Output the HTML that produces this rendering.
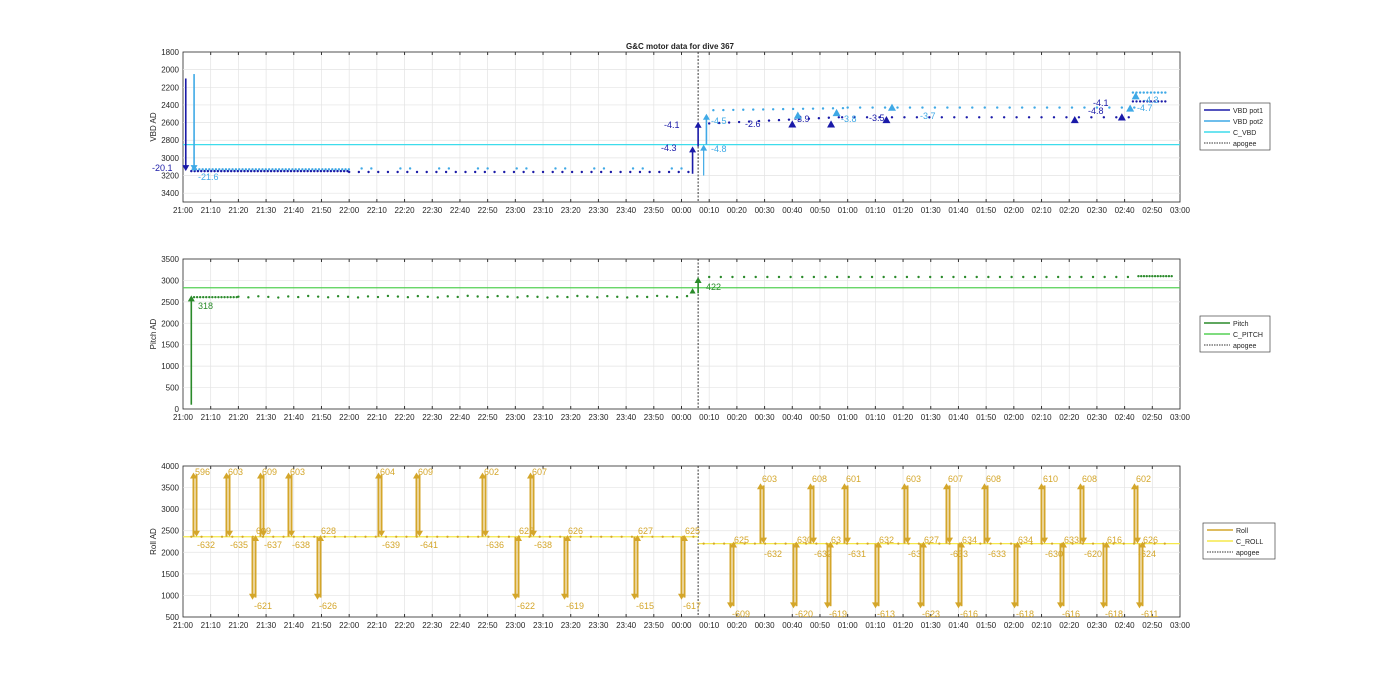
<!DOCTYPE html>
<html><head><meta charset="utf-8"><style>
html,body{margin:0;padding:0;background:#fff;width:1400px;height:693px;overflow:hidden}
svg{display:block;font-family:"Liberation Sans",Arial,sans-serif}
</style></head><body>
<svg id="s" width="1400" height="693" xmlns="http://www.w3.org/2000/svg">
<text x="680" y="49" font-size="8" text-anchor="middle" font-weight="bold" fill="#222">G&amp;C motor data for dive 367</text>
</svg>
<script>
const S=document.getElementById('s');let h='';
const X0=183,X1=1180,T=360;
const X=t=>X0+t*(X1-X0)/T;
const labs=[];for(let i=0;i<=36;i++){let m=21*60+i*10;let hh=Math.floor(m/60)%24,mm=m%60;labs.push(String(hh).padStart(2,'0')+':'+String(mm).padStart(2,'0'));}
function axes(top,bot,ymin,ymax,step,ylab){
 const Y=v=>top+(v-ymin)*(bot-top)/(ymax-ymin);
 h+=`<rect x="${X0}" y="${top}" width="${X1-X0}" height="${bot-top}" fill="#fff" stroke="#262626" stroke-width="0.8"/>`;
 for(let i=1;i<36;i++){let x=X(i*10);h+=`<line x1="${x}" y1="${top}" x2="${x}" y2="${bot}" stroke="#e3e3e3" stroke-width="0.7"/><line x1="${x}" y1="${top}" x2="${x}" y2="${top+3}" stroke="#333"/><line x1="${x}" y1="${bot}" x2="${x}" y2="${bot-3}" stroke="#333"/>`;}
 for(let i=0;i<=36;i++){h+=`<text x="${X(i*10)}" y="${bot+11}" font-size="8" text-anchor="middle" fill="#262626">${labs[i]}</text>`;}
 let a=Math.min(ymin,ymax),b=Math.max(ymin,ymax);
 for(let v=a;v<=b;v+=step){let y=Y(v);if(v!=a&&v!=b)h+=`<line x1="${X0}" y1="${y}" x2="${X1}" y2="${y}" stroke="#e3e3e3" stroke-width="0.7"/>`;h+=`<text x="${X0-4}" y="${y+3}" font-size="8" text-anchor="end" fill="#262626">${v}</text>`;}
 h+=`<text transform="translate(${X0-27},${(top+bot)/2}) rotate(-90)" font-size="8" text-anchor="middle" fill="#262626">${ylab}</text>`;
 h+=`<line x1="${X(186)}" y1="${top}" x2="${X(186)}" y2="${bot}" stroke="#222" stroke-dasharray="2,1.5" stroke-width="0.9"/>`;
 return Y;
}
function arrow(x,y1,y2,c,w){let d=y2>y1?1:-1;h+=`<line x1="${x}" y1="${y1}" x2="${x}" y2="${y2-d*4}" stroke="${c}" stroke-width="${w}"/><polygon points="${x-3.5},${y2-d*6} ${x+3.5},${y2-d*6} ${x},${y2}" fill="${c}"/>`;}
function tx(x,y,s,c,fs){h+=`<text x="${x}" y="${y}" font-size="${fs||9}" fill="${c}">${s}</text>`;}
function dot(x,y,c,r){h+=`<circle cx="${x}" cy="${y}" r="${r||1.2}" fill="${c}"/>`;}
function tri(x,y,c,s){s=s||4;h+=`<polygon points="${x-s},${y+s*0.8} ${x+s},${y+s*0.8} ${x},${y-s}" fill="${c}"/>`;}
function legend(x,y,w,items){h+=`<rect x="${x}" y="${y}" width="${w}" height="${items.length*11+3}" fill="#fff" stroke="#444" stroke-width="0.7"/>`;items.forEach((it,i)=>{let yy=y+7+i*11;h+=`<line x1="${x+4}" y1="${yy}" x2="${x+30}" y2="${yy}" stroke="${it[1]}" stroke-width="${it[2]||1.5}" ${it[3]?'stroke-dasharray="1.5,1"':''}/>`;tx(x+33,yy+3,it[0],'#262626',7);});}
const DB='#1a1aa8',LB='#3fa9e6',CY='#3ddcec',GR='#2a8a2a',GO='#d4a62a',YE='#f5e84a';
// TOP
let Y=axes(52,202,1800,3500,200,'VBD AD');
h+=`<line x1="${X0}" y1="${Y(2850)}" x2="${X1}" y2="${Y(2850)}" stroke="${CY}" stroke-width="1.2"/>`;
for(let t=3;t<60;t+=1.2){dot(X(t),Y(3150),DB);dot(X(t+0.5),Y(3130),LB);}
for(let t=60;t<185;t+=3.5){dot(X(t),Y(3160),DB);if((t|0)%2)dot(X(t+1),Y(3120),LB);}
for(let t=190;t<238;t+=3.6){dot(X(t),Y(2610-(t-190)*1.5),DB);dot(X(t+1.5),Y(2460-(t-190)*0.5),LB);}
for(let t=238;t<343;t+=4.5){dot(X(t),Y(2540),DB);dot(X(t+2),Y(2430),LB);}
for(let t=343;t<355;t+=1.3){dot(X(t),Y(2360),DB);dot(X(t),Y(2260),LB);}
arrow(X(1),Y(2100),Y(3150),DB,1.6);arrow(X(4),Y(2050),Y(3150),LB,1.6);
tx(152,171,'-20.1',DB);tx(198,180,'-21.6',LB);
arrow(X(184),Y(3180),Y(2870),DB,1.6);arrow(X(186),Y(2870),Y(2590),DB,1.6);
arrow(X(188),Y(3200),Y(2850),LB,1.2);arrow(X(189),Y(2850),Y(2500),LB,1.6);
tx(661,151,'-4.3',DB);tx(664,128,'-4.1',DB);tx(711,124,'-4.5',LB);tx(711,152,'-4.8',LB);
tx(745,127,'-2.6',DB);tx(794,122,'-3.9',DB);tx(841,122,'-3.8',LB);tx(869,121,'-3.5',DB);tx(920,119,'-3.7',LB);
tri(X(220),Y(2620),DB);tri(X(222),Y(2520),LB);tri(X(234),Y(2620),DB);tri(X(236),Y(2490),LB);tri(X(254),Y(2570),DB);tri(X(256),Y(2430),LB);tri(X(322),Y(2570),DB);
tri(X(339),Y(2540),DB);tri(X(342),Y(2440),LB);tri(X(344),Y(2300),LB);
tx(1093,106,'-4.1',DB);tx(1088,114,'-4.8',DB);tx(1137,111,'-4.7',LB);tx(1143,103,'-4.3',LB);
legend(1200,103,70,[['VBD pot1',DB],['VBD pot2',LB],['C_VBD',CY],['apogee','#333',1,1]]);
// MIDDLE
Y=axes(259,409,3500,0,500,'Pitch AD');
h+=`<line x1="${X0}" y1="${Y(2830)}" x2="${X1}" y2="${Y(2830)}" stroke="#55d055" stroke-width="1.2"/>`;
for(let t=4;t<20;t+=1.1)dot(X(t),Y(2610),GR);
for(let t=20;t<183;t+=3.6)dot(X(t),Y(2600+((t*7)%40)),GR);
for(let t=190;t<345;t+=4.2)dot(X(t),Y(3080),GR);
for(let t=345;t<358;t+=1)dot(X(t),Y(3100),GR);
arrow(X(3),Y(100),Y(2650),GR,1.6);tx(198,309,'318',GR);
arrow(X(186),Y(2700),Y(3080),GR,1.6);tri(X(184),Y(2750),GR,3);tx(706,290,'422',GR);
legend(1200,316,70,[['Pitch',GR],['C_PITCH','#55d055'],['apogee','#333',1,1]]);
// BOTTOM
Y=axes(466,617,4000,500,500,'Roll AD');
h+=`<line x1="${X0}" y1="${Y(2360)}" x2="${X(186)}" y2="${Y(2360)}" stroke="${YE}" stroke-width="1.3"/><line x1="${X(186)}" y1="${Y(2200)}" x2="${X1}" y2="${Y(2200)}" stroke="${YE}" stroke-width="1.3"/>`;
for(let t=3;t<185;t+=3.7)dot(X(t),Y(2360),GO,1.1);
for(let t=188;t<358;t+=3.7)dot(X(t),Y(2200),GO,1.1);
const up1=[[195,'596','-632'],[228,'603','-635'],[262,'609','-637'],[290,'603','-638'],[380,'604','-639'],[418,'609','-641'],[484,'602','-636'],[532,'607','-638']];
up1.forEach(a=>{arrow(a[0]-1.5,Y(2360),Y(3850),GO,2);arrow(a[0]+1.5,Y(3800),Y(2360),GO,2);tx(a[0],475,a[1],GO);tx(a[0]+2,548,a[2],GO);});
const dn1=[[254,'609','-621'],[319,'628','-626'],[517,'628','-622'],[566,'626','-619'],[636,'627','-615'],[683,'625','-617']];
dn1.forEach(a=>{arrow(a[0]-1.5,Y(2360),Y(900),GO,2);arrow(a[0]+1.5,Y(950),Y(2400),GO,2);tx(a[0]+2,534,a[1],GO);tx(a[0],609,a[2],GO);});
const up2=[[762,'603','-632'],[812,'608','-632'],[846,'601','-631'],[906,'603','-63'],[948,'607','-633'],[986,'608','-633'],[1043,'610','-630'],[1082,'608','-620'],[1136,'602','-624']];
up2.forEach(a=>{arrow(a[0]-1.5,Y(2200),Y(3600),GO,2);arrow(a[0]+1.5,Y(3550),Y(2200),GO,2);tx(a[0],482,a[1],GO);tx(a[0]+2,557,a[2],GO);});
const dn2=[[732,'625','-609'],[795,'630','-620'],[829,'63','-619'],[877,'632','-613'],[922,'627','-623'],[960,'634','-616'],[1016,'634','-618'],[1062,'633','-616'],[1105,'616','-618'],[1141,'626','-611']];
dn2.forEach(a=>{arrow(a[0]-1.5,Y(2200),Y(700),GO,2);arrow(a[0]+1.5,Y(750),Y(2250),GO,2);tx(a[0]+2,543,a[1],GO);tx(a[0],617,a[2],GO);});
legend(1203,523,72,[['Roll',GO],['C_ROLL',YE],['apogee','#333',1,1]]);
S.insertAdjacentHTML('beforeend',h);
</script>
</body></html>
